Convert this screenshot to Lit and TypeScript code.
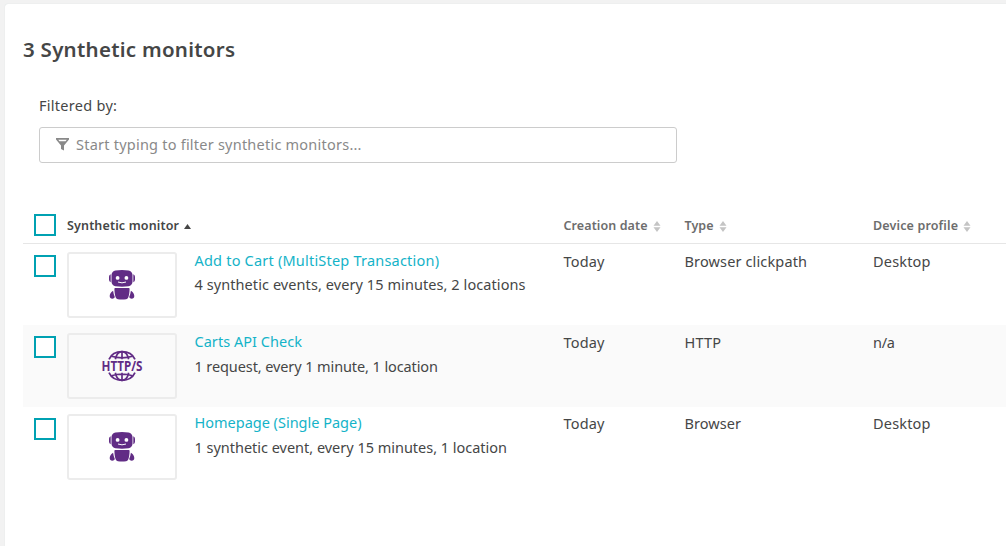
import { LitElement, html, css, svg } from "lit";
import { customElement, property } from "lit/decorators.js";

/** A single line of text whose tracking is adjusted to fill a given width. */
@customElement("tracked-text")
class TrackedText extends LitElement {
  @property() text = "";
  @property({ type: Number }) width = 0;
  static styles = css`
    :host { display: block; white-space: pre; }
    .text { display: inline-block; }
  `;
  render() {
    return html`<span class="text">${this.text}</span>`;
  }
  updated() {
    const el = this.renderRoot.querySelector<HTMLElement>(".text")!;
    el.style.letterSpacing = "0px";
    const natural = el.getBoundingClientRect().width;
    el.style.letterSpacing = `${(this.width - natural) / (this.text.length - 1)}px`;
  }
}

const t = (text: string, width: number) =>
  html`<tracked-text .text=${text} .width=${width}></tracked-text>`;

const robot = svg`
  <svg class="robot" width="26" height="30" viewBox="0 0 26 30">
    <g fill="#612c85">
      <path d="M6.500 .5q6.500-.8 13 0 3.600.8 4 4.200v7.400q-.4 3.400-4 4.200-6.500.7-13 0-3.600-.8-4-4.200v-7.400q.4-3.400 4-4.200z"/>
      <path d="M1.700 4.300v8q-1.700-.6-1.700-2.500v-3q0-1.900 1.700-2.500zM24.300 4.300v8q1.700-.6 1.700-2.500v-3q0-1.900-1.700-2.500z"/>
      <path d="M6.200 18h13.600q.9 0 .8.900c-.1 3.400-.5 6.400-1.500 8.800q-.6 1.400-2 1.600-4.100.5-8.200 0-1.400-.2-2-1.600c-1-2.400-1.400-5.400-1.500-8.800q-.1-.9.800-.9z"/>
      <path d="M4.100 20.700c-2 1.100-3.400 3.300-3.400 5.400 0 1.700 1.100 2.700 2.600 2.700 1.200 0 2.100-.7 2.500-1.700-.9-2-1.400-4.200-1.700-6.400zM21.900 20.700c2 1.100 3.400 3.300 3.400 5.400 0 1.700-1.100 2.700-2.600 2.700-1.200 0-2.100-.7-2.500-1.700.9-2 1.400-4.200 1.700-6.400z"/>
    </g>
    <circle cx="8.600" cy="7.900" r="1.900" fill="#fff"/>
    <circle cx="17.400" cy="7.900" r="1.900" fill="#fff"/>
    <path d="M9 12q4 1.700 8 0" fill="none" stroke="#fff" stroke-width="1"/>
  </svg>`;

const globe = svg`
  <svg class="globe" width="46" height="32" viewBox="0 0 46 32">
    <g fill="none" stroke="#612c85" stroke-width="1.700">
      <path d="M10 9.300C12.200 4.400 17 1.700 23 1.700S33.800 4.400 36 9.300M10 22.700C12.200 27.600 17 30.300 23 30.300S33.800 27.600 36 22.700"/>
      <path d="M16.300 9.300C17.200 5.200 19.700 1.700 23 1.700S28.800 5.200 29.700 9.300M16.300 22.700C17.200 26.800 19.700 30.300 23 30.300S28.800 26.800 29.700 22.700"/>
      <path d="M23 1.500v7.800M23 22.700v7.800M12.500 6.300q10.500 3 21 0M12.500 25.700q10.500-3 21 0"/>
    </g>
    <text class="proto" x="2.500" y="20.800" textLength="41" lengthAdjust="spacingAndGlyphs">HTTP/S</text>
  </svg>`;

const sorter = svg`
  <svg class="sorter" width="8" height="11" viewBox="0 0 8 11">
    <path d="M4 0 7.500 4.700h-7zM4 11 7.500 6.300h-7z" fill="#c4c4c4"/>
  </svg>`;

interface Monitor {
  name: [string, number];
  info: [string, number];
  type: [string, number];
  device: [string, number];
  http?: boolean;
  rowClass: string;
}

const monitors: Monitor[] = [
  { name: ["Add to Cart (MultiStep Transaction)", 244.5], info: ["4 synthetic events, every 15 minutes, 2 locations", 331], type: ["Browser clickpath", 122.5], device: ["Desktop", 57.5], rowClass: "first" },
  { name: ["Carts API Check", 107.5], info: ["1 request, every 1 minute, 1 location", 243.5], type: ["HTTP", 36.5], device: ["n/a", 22], http: true, rowClass: "even" },
  { name: ["Homepage (Single Page)", 167], info: ["1 synthetic event, every 15 minutes, 1 location", 312.5], type: ["Browser", 56.5], device: ["Desktop", 57.5], rowClass: "last" },
];

@customElement("app-root")
class AppRoot extends LitElement {
  static styles = css`
    :host {
      display: block;
      box-sizing: border-box;
      height: 546px;
      padding: 4px 0 0 5px;
      overflow: hidden;
      background: #f2f2f2;
      color: #454646;
      font: 14.5px/20px "Noto Sans", sans-serif;
    }
    .panel {
      box-sizing: border-box;
      height: 542px;
      padding: 31px 0 0 18px;
      background: #fff;
      border-radius: 3px 0 0 0;
      box-shadow: 0 0 1px #c9d4d4;
    }
    h1 { margin: 0; font-size: 20.500px; line-height: 28px; font-weight: 600; }
    .filter { padding: 32px 0 0 16px; }
    .input {
      display: flex;
      align-items: center;
      box-sizing: border-box;
      width: 638px;
      height: 36px;
      margin-top: 12px;
      padding: 0 0 2px 16px;
      gap: 7px;
      border: 1px solid #ccc;
      border-radius: 3px;
      color: #898989;
    }
    .table { margin-top: 44px; }
    .head, .row {
      display: grid;
      grid-template-columns: 44px 127.500px 369px 121px 188.500px 1fr;
    }
    .head {
      box-sizing: border-box;
      height: 37px;
      border-bottom: 1px solid #e6e6e6;
      color: #6d6d6d;
      font-size: 12.500px;
      font-weight: 600;
      line-height: 18px;
    }
    .cell { display: flex; align-items: center; gap: 5px; height: 18px; padding-top: 10px; }
    .sorted { grid-column: 2 / 4; color: #454646; }
    .sorter { margin-top: 1px; }
    .up { margin-top: 1px; }
    .funnel { margin-top: 1px; }
    .check {
      box-sizing: border-box;
      width: 22px;
      height: 22px;
      margin: 11px 0 0 11px;
      border: 2px solid #00a1b2;
      background: #fff;
    }
    .head .check { margin-top: 7px; }
    .row { height: 81px; }
    .even { height: 82px; background: #fafafa; }
    .thumb {
      display: flex;
      align-items: center;
      justify-content: center;
      box-sizing: border-box;
      width: 110px;
      height: 66px;
      margin-top: 8px;
      border: 2px solid #ececec;
      border-radius: 3px;
    }
    .last .thumb { margin-top: 7px; }
    .robot { margin-top: -1px; }
    .globe { overflow: visible; }
    .proto { font: 700 13.500px "Noto Sans", sans-serif; fill: #612c85; }
    .name { margin-top: 6px; color: #14b3c8; }
    .info { margin-top: 4px; }
    .even .info { margin-top: 5px; }
    .value { margin-top: 7px; }
    .last .name { margin-top: 5px; }
    .last .info { margin-top: 5px; }
    .last .value { margin-top: 6px; }
  `;

  render() {
    return html`
      <main class="panel">
        <h1>${t("3 Synthetic monitors", 212)}</h1>
        <section class="filter">
          ${t("Filtered by:", 78)}
          <div class="input">
            <svg class="funnel" width="13" height="13" viewBox="0 0 13 13">
              <path fill="#898989" fill-rule="evenodd" d="M0 0h13v1.500L8 7.500V12.500l-3-1.500V7.500L0 1.500zM2.300 1.800 3.400 3.300h6.200l1.100-1.500z"/>
            </svg>
            ${t("Start typing to filter synthetic monitors...", 285.5)}
          </div>
        </section>
        <section class="table">
          <div class="head">
            <div class="check"></div>
            <div class="cell sorted">
              ${t("Synthetic monitor", 112)}
              <svg class="up" width="7" height="5" viewBox="0 0 7 5"><path fill="#454646" d="M3.500 0 7 5H0z"/></svg>
            </div>
            <div class="cell">${t("Creation date", 84)}${sorter}</div>
            <div class="cell">${t("Type", 29)}${sorter}</div>
            <div class="cell">${t("Device profile", 85)}${sorter}</div>
          </div>
          ${monitors.map((m) => html`
            <div class="row ${m.rowClass}">
              <div class="check"></div>
              <div class="thumb">${m.http ? globe : robot}</div>
              <div>
                <div class="name">${t(...m.name)}</div>
                <div class="info">${t(...m.info)}</div>
              </div>
              <div class="value">${t("Today", 41)}</div>
              <div class="value">${t(...m.type)}</div>
              <div class="value">${t(...m.device)}</div>
            </div>`)}
        </section>
      </main>`;
  }
}
